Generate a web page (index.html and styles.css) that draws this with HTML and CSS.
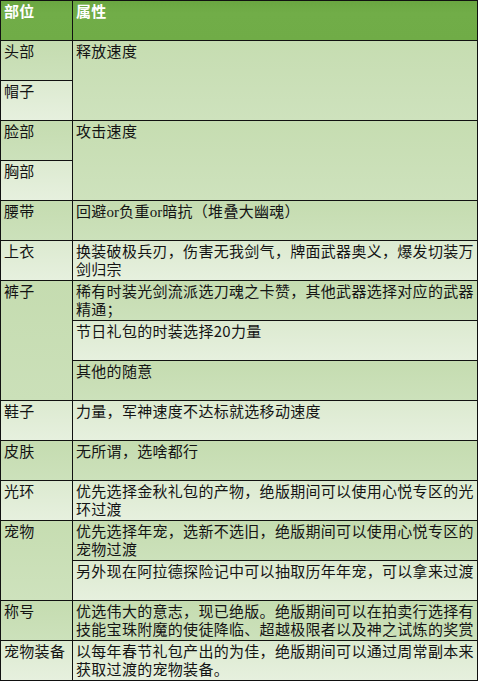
FILE: index.html
```html
<!DOCTYPE html>
<html lang="zh-CN">
<head>
<meta charset="utf-8">
<title>部位属性</title>
<link rel="stylesheet" href="styles.css">
</head>
<body>
<table class="gear">
  <thead>
    <tr class="head"><th class="c-part">部位</th><th>属性</th></tr>
  </thead>
  <tbody>
    <tr><td class="dk">头部</td><td class="dk2" rowspan="2">释放速度</td></tr>
    <tr><td class="lt">帽子</td></tr>
    <tr><td class="dk">脸部</td><td class="dk2" rowspan="2">攻击速度</td></tr>
    <tr><td class="lt">胸部</td></tr>
    <tr><td class="dk">腰带</td><td class="dk">回避<span class="lat">or</span>负重<span class="lat">or</span>暗抗（堆叠大幽魂）</td></tr>
    <tr><td class="lt">上衣</td><td class="lt">换装破极兵刃，伤害无我剑气，牌面武器奥义，爆发切装万<br>剑归宗</td></tr>
    <tr><td class="dk3" rowspan="3">裤子</td><td class="dk">稀有时装光剑流派选刀魂之卡赞，其他武器选择对应的武器<br>精通；</td></tr>
    <tr><td class="lt">节日礼包的时装选择20力量</td></tr>
    <tr><td class="dk">其他的随意</td></tr>
    <tr><td class="lt">鞋子</td><td class="lt">力量，军神速度不达标就选移动速度</td></tr>
    <tr><td class="dk">皮肤</td><td class="dk">无所谓，选啥都行</td></tr>
    <tr><td class="lt">光环</td><td class="lt">优先选择金秋礼包的产物，绝版期间可以使用心悦专区的光<br>环过渡</td></tr>
    <tr><td class="dk2" rowspan="2">宠物</td><td class="dk">优先选择年宠，选新不选旧，绝版期间可以使用心悦专区的<br>宠物过渡</td></tr>
    <tr><td class="lt">另外现在阿拉德探险记中可以抽取历年年宠，可以拿来过渡</td></tr>
    <tr><td class="dk">称号</td><td class="dk">优选伟大的意志，现已绝版。绝版期间可以在拍卖行选择有<br>技能宝珠附魔的使徒降临、超越极限者以及神之试炼的奖赏</td></tr>
    <tr><td class="lt">宠物装备</td><td class="lt">以每年春节礼包产出的为佳，绝版期间可以通过周常副本来<br>获取过渡的宠物装备。</td></tr>
  </tbody>
</table>
</body>
</html>
```

FILE: styles.css
```css
html, body {
  margin: 0;
  padding: 0;
  background: #ffffff;
}

.gear {
  border-collapse: separate;
  border-spacing: 0;
  width: 478px;
  table-layout: fixed;
  border-top: 1px solid #111;
  border-left: 1px solid #111;
  font-family: "Noto Sans CJK SC", "Noto Sans", sans-serif;
  font-size: 15px;
  line-height: 18px;
  letter-spacing: 0.3px;
  color: #141414;
}

.gear .c-part {
  width: 72px;
}

.gear tr {
  height: 40px;
}

.gear th,
.gear td {
  box-sizing: border-box;
  border: 0;
  border-right: 1px solid #111;
  border-bottom: 1px solid #111;
  padding: 1px 1px 0 3px;
  vertical-align: top;
  text-align: left;
  overflow: hidden;
  white-space: normal;
}

.head th {
  background: linear-gradient(#6aa641, #71ad48 30%, #70ac47);
  color: #ffffff;
  font-weight: bold;
}

.lat {
  font-family: "Liberation Serif", serif;
  letter-spacing: 0;
}

.dk {
  background: linear-gradient(#c5dcb0, #cce1bb);
}

.dk2 {
  background: linear-gradient(#c6ddb1, #cee2bd);
}

.dk3 {
  background: linear-gradient(#c5dcb0, #cbe0b9);
}

.lt {
  background: linear-gradient(#dcead0, #e6f0de);
}
```
